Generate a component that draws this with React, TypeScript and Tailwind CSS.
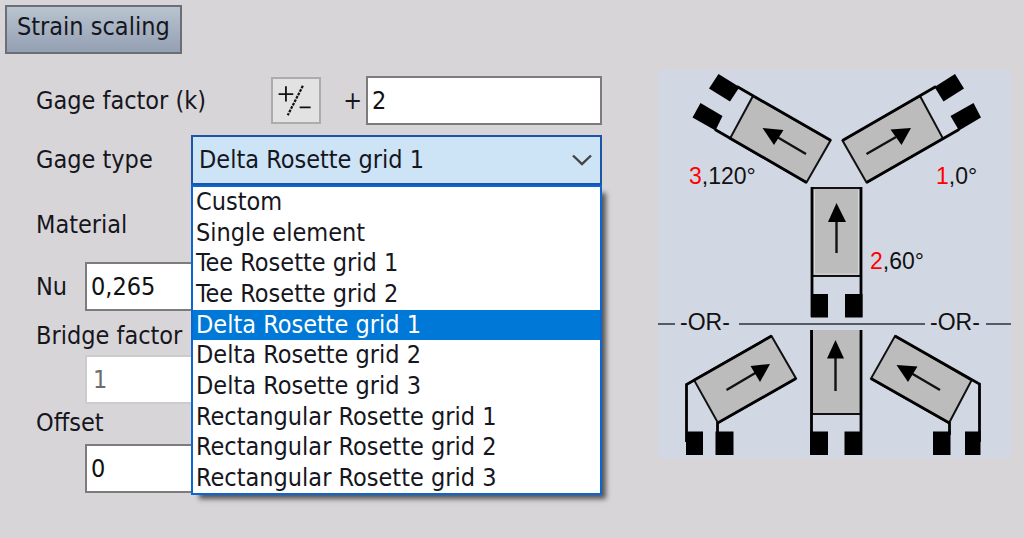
import { useState } from "react";

const gageTypes = [
  "Custom",
  "Single element",
  "Tee Rosette grid 1",
  "Tee Rosette grid 2",
  "Delta Rosette grid 1",
  "Delta Rosette grid 2",
  "Delta Rosette grid 3",
  "Rectangular Rosette grid 1",
  "Rectangular Rosette grid 2",
  "Rectangular Rosette grid 3",
];

const field =
  "h-[49px] w-full min-w-0 border-2 border-[#7c7c7c] bg-white px-1 text-[#111] outline-none";

function PlusMinusIcon() {
  return (
    <svg viewBox="0 0 50 47" className="h-full w-full" stroke="#111" strokeWidth="2" fill="none" aria-hidden="true">
      <path d="M6 16.500H22M14 8V24.500M29 31H41" />
      <path d="M32.500 7.500L16 39.500" strokeDasharray="3 1.200" strokeWidth="2.400" />
    </svg>
  );
}

function Arrow({ line, head }: { line: string; head: string }) {
  return (
    <>
      <path d={line} stroke="#111" strokeWidth="2.400" />
      <polygon points={head} fill="#000" />
    </>
  );
}

function RosetteDiagram() {
  return (
    <svg
      viewBox="658 70 353 388"
      className="block h-auto w-full bg-[#d1d8e4]"
      role="img"
      aria-label="Delta rosette grid orientation"
      fill="none"
    >
      <g fill="#bcbcbc" stroke="#111" strokeWidth="2">
        <polygon points="753,96 830.500,140.500 806.500,182.500 730,138.500" />
        <polygon points="920,96 842.500,140.500 866.500,182.500 943,138.500" />
        <rect x="812" y="188" width="49" height="88" />
        <polygon points="771.500,336 796,378.500 718,423 694,380" />
        <path d="M812 330V414H861V330" />
        <polygon points="895,336 971.500,380.500 949,423 871,378.500" />
      </g>
      <path d="M814.500 190V274H858.500V190" stroke="#d8d8d8" strokeWidth="1" />
      <g stroke="#000" strokeWidth="2.800">
        <path d="M737 86.500L831 140.500M715 129.500L806.500 182.500" />
        <path d="M936 86.500L842.500 140.500M959 129.500L866.500 182.500" />
        <path d="M812 187V317M861 187V317M811.500 330V455M861 330V455" />
        <path d="M686.500 442V384.500L771.500 336M717.500 435V423L796 378.500" />
        <path d="M895 336L979.500 384V442M949.500 435V423L871 378.500" />
      </g>
      <g fill="#000">
        <polygon points="718.500,74 739.500,87 730,101.500 709,88.500" />
        <polygon points="700.500,103 722.500,116 715.500,130.500 692.500,117.500" />
        <polygon points="955,74 964,88.500 943.500,101.500 934.500,87" />
        <polygon points="973.500,103 981,117.500 959,130.500 950.500,116" />
        <rect x="811" y="294" width="17" height="23.500" />
        <rect x="845" y="294" width="17.500" height="23.500" />
        <rect x="686" y="431.500" width="17" height="23.500" />
        <rect x="715.500" y="431.500" width="18" height="23.500" />
        <rect x="810" y="431.500" width="18" height="23.500" />
        <rect x="844.500" y="431.500" width="17.500" height="23.500" />
        <rect x="933" y="431.500" width="17.500" height="23.500" />
        <rect x="965" y="431.500" width="15.500" height="23.500" />
      </g>
      <Arrow line="M806 154L778 137.500" head="762.500,128 783.500,130 774,145" />
      <Arrow line="M866.500 154L896 137" head="911,128 890.500,129.500 901.500,145" />
      <Arrow line="M836.500 253V220" head="836.500,203 828,222 846,222" />
      <Arrow line="M726.500 390L757 372" head="770,364 750.500,366 760,382" />
      <Arrow line="M835.500 391V357" head="835.500,340 827,358.500 844,358.500" />
      <Arrow line="M940 390L911 373" head="896.500,365 917.500,366.500 908,382" />
      <path d="M658 324H675M739 324H925M986 324H1011" stroke="#555b66" strokeWidth="2" />
      <g fill="#111" fontSize="23" className="font-['Liberation_Sans',Arial,sans-serif]">
        <text x="689" y="184"><tspan fill="#f00">3</tspan>,120°</text>
        <text x="936" y="184"><tspan fill="#f00">1</tspan>,0°</text>
        <text x="870" y="269"><tspan fill="#f00">2</tspan>,60°</text>
        <text x="680" y="330">-OR-</text>
        <text x="930" y="330">-OR-</text>
      </g>
    </svg>
  );
}

export default function App() {
  const [type, setType] = useState("Delta Rosette grid 1");
  return (
    <main className="min-h-screen bg-[#d8d5d8] pt-[5px] font-['DejaVu_Sans_Condensed','DejaVu_Sans',Tahoma,sans-serif] text-[25px] leading-[30px] text-[#16161e]">
      <button
        type="button"
        className="ml-[5px] block h-[49px] border-2 border-[#6b6f75] bg-linear-to-b from-[#b9c4d0] to-[#94a0b3] px-[10px] pb-[6px]"
      >
        Strain scaling
      </button>
      <div className="flex items-start gap-14 pr-[13px] pl-9">
        <form className="mt-[22px] min-w-0 flex-1" onSubmit={(e) => e.preventDefault()}>
          <div className="flex items-center">
            <label htmlFor="gage-factor" className="w-[235px] shrink-0">Gage factor (k)</label>
            <button type="button" aria-label="Toggle sign" className="h-[47px] w-[50px] shrink-0 border-2 border-[#acacac] bg-[#e3e2e3]">
              <PlusMinusIcon />
            </button>
            <span className="w-[45px] shrink-0 pr-1 text-right">+</span>
            <input id="gage-factor" defaultValue="2" className={field} />
          </div>

          <div className="mt-[10px] flex items-center">
            <label htmlFor="gage-type" className="w-[155px] shrink-0">Gage type</label>
            <div className="relative min-w-0 flex-1">
              <select
                id="gage-type"
                value={type}
                onChange={(e) => setType(e.target.value)}
                className="block h-[50px] w-full appearance-none border-2 border-[#1c54a8] bg-[#cde4f7] px-[6px] outline-none"
              >
                {gageTypes.map((t) => (
                  <option key={t}>{t}</option>
                ))}
              </select>
              <svg viewBox="0 0 20 12" className="pointer-events-none absolute top-[19px] right-[10px] h-3 w-5" fill="none" stroke="#444" strokeWidth="2.400" aria-hidden="true">
                <path d="M1 1.500L10 10L19 1.500" />
              </svg>
              <ul
                role="listbox"
                aria-label="Gage type"
                className="absolute inset-x-0 top-full z-10 flex h-[310px] flex-col justify-between border-2 border-[#0b66d4] bg-white shadow-[6px_6px_5px_-2px_rgba(0,0,0,0.6)]"
              >
                {gageTypes.map((t) => (
                  <li
                    key={t}
                    role="option"
                    aria-selected={t === type}
                    onClick={() => setType(t)}
                    className={t === type ? "bg-[#0078d7] pl-[3px] whitespace-nowrap text-white" : "pl-[3px] whitespace-nowrap"}
                  >
                    {t}
                  </li>
                ))}
              </ul>
            </div>
          </div>

          <p className="mt-[25px]">Material</p>

          <div className="mt-[22px] flex items-center">
            <label htmlFor="nu" className="w-[49px] shrink-0">Nu</label>
            <input id="nu" defaultValue="0,265" className={field} />
          </div>

          <label htmlFor="bridge-factor" className="mt-[10px] block">Bridge factor</label>
          <div className="mt-1 pl-[49px]">
            <input
              id="bridge-factor"
              disabled
              defaultValue="1"
              className="block h-[49px] w-full border-2 border-[#ccc] bg-white px-[6px] text-[#6d6d6d]"
            />
          </div>

          <label htmlFor="offset" className="mt-1 block">Offset</label>
          <div className="mt-[6px] pl-[49px]">
            <input id="offset" defaultValue="0" className={field} />
          </div>
        </form>
        <figure className="mt-4 w-[353px] shrink-0">
          <RosetteDiagram />
        </figure>
      </div>
    </main>
  );
}
